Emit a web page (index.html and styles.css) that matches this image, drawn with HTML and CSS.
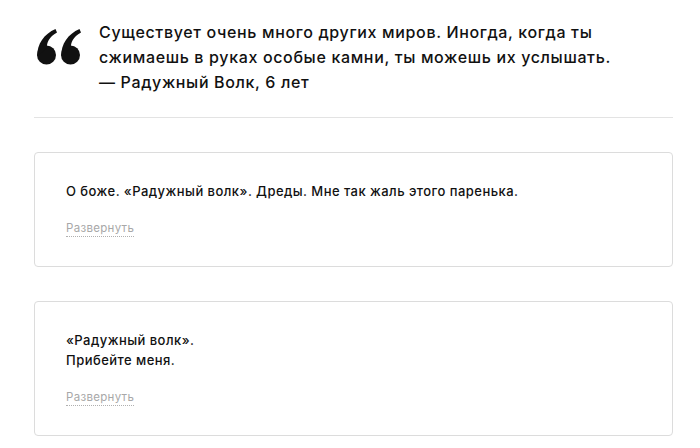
FILE: index.html
```html
<!DOCTYPE html>
<html lang="ru">
<head>
<meta charset="utf-8">
<link rel="stylesheet" href="styles.css">
</head>
<body>
<div class="page">
  <div class="quote">
    <svg class="qmark" width="44" height="36" viewBox="0 0 44 36">
      <g fill="#111">
        <circle cx="9.5" cy="26" r="9.5"/>
        <path d="M0.3,27 C0,15 7,5 18.5,0 L20,3.5 C12,8 9.5,14 10,19 Z"/>
        <circle cx="33.5" cy="26" r="9.5"/>
        <path d="M24.3,27 C24,15 31,5 42.5,0 L44,3.5 C36,8 33.5,14 34,19 Z"/>
      </g>
    </svg>
    <p class="qtext">Существует очень много других миров. Иногда, когда ты сжимаешь в руках особые камни, ты можешь их услышать.<br>— Радужный Волк, 6 лет</p>
  </div>
  <hr class="divider">
  <div class="card">
    <p class="ctext">О боже. «Радужный волк». Дреды. Мне так жаль этого паренька.</p>
    <a class="more">Развернуть</a>
  </div>
  <div class="card">
    <p class="ctext">«Радужный волк».<br>Прибейте меня.</p>
    <a class="more">Развернуть</a>
  </div>
</div>
</body>
</html>
```
FILE: styles.css
```css
html, body {
  margin: 0;
  padding: 0;
  background: #fff;
}
body {
  font-family: Inter, "Open Sans", sans-serif;
  color: #1c1c1c;
}
.page {
  width: 639px;
  margin-left: 34px;
  padding-top: 20px;
}
.quote {
  display: flex;
  align-items: flex-start;
  gap: 18px;
  padding-left: 3px;
}
.qmark {
  flex: none;
  margin-top: 9px;
}
.qtext {
  margin: 0;
  max-width: 540px;
  font-size: 16px;
  line-height: 25px;
  font-weight: 500;
  letter-spacing: 0.65px;
  color: #111;
}
.divider {
  border: 0;
  border-top: 1px solid #e3e3e3;
  margin: 22px 0 34px;
}
.card {
  border: 1px solid #dcdcdc;
  border-radius: 4px;
  padding: 28px 31px 29px;
  margin-bottom: 34px;
}
.ctext {
  margin: 0 0 15px;
  font-size: 13px;
  line-height: 20px;
  font-weight: 500;
  letter-spacing: 0.46px;
  color: #111;
}
.more {
  display: inline-block;
  font-size: 11.5px;
  color: #a8a8a8;
  line-height: 16px;
  letter-spacing: 0.3px;
  border-bottom: 1px dotted #b0b0b0;
}
```
